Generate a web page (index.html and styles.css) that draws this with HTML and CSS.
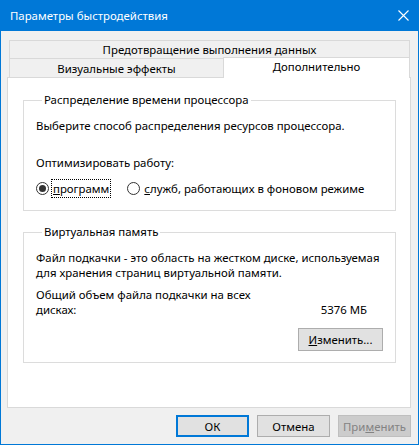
FILE: index.html
```html
<!DOCTYPE html>
<html lang="ru">
<head>
    <meta charset="UTF-8">
    <title>Параметры быстродействия</title>
    <link rel="stylesheet" href="styles.css">
</head>
<body>

    <div class="window">
        <!-- Заголовок окна -->
        <div class="titlebar">
            <span>Параметры быстродействия</span>
            <svg class="close" width="11" height="11" viewBox="0 0 11 11">
                <path d="M0.5 0.5 L10.5 10.5 M10.5 0.5 L0.5 10.5" stroke="#fff" stroke-width="1.1" fill="none"/>
            </svg>
        </div>

        <div class="dialog-body">
            <!-- Вкладки -->
            <div class="tabs">
                <div class="tab-row">
                    <div class="tab tab-wide">Предотвращение выполнения данных</div>
                </div>
                <div class="tab-row">
                    <div class="tab tab-left">Визуальные эффекты</div>
                    <div class="tab tab-active">Дополнительно</div>
                </div>
            </div>

            <div class="panel">
                <div class="group group-cpu">
                    <div class="group-title">Распределение времени процессора</div>
                    <p class="line first">Выберите способ распределения ресурсов процессора.</p>
                    <p class="line optimize">Оптимизировать работу:</p>
                    <div class="radio-row">
                        <label class="radio">
                            <span class="radio-circle checked"></span>
                            <span class="radio-text focused"><u>п</u>рограмм</span>
                        </label>
                        <label class="radio">
                            <span class="radio-circle"></span>
                            <span class="radio-text"><u>с</u>лужб, работающих в фоновом режиме</span>
                        </label>
                    </div>
                </div>

                <div class="group group-vm">
                    <div class="group-title">Виртуальная память</div>
                    <p class="line first">Файл подкачки - это область на жестком диске, используемая<br>для хранения страниц виртуальной памяти.</p>
                    <div class="size-row">
                        <p class="line">Общий объем файла подкачки на всех<br>дисках:</p>
                        <span class="line size-value">5376 МБ</span>
                    </div>
                    <div class="change-row">
                        <button class="btn btn-change"><u>И</u>зменить...</button>
                    </div>
                </div>
            </div>

            <!-- Кнопки диалога -->
            <div class="buttons">
                <button class="btn btn-default">ОК</button>
                <button class="btn">Отмена</button>
                <button class="btn" disabled>При<u>м</u>енить</button>
            </div>
        </div>
    </div>

</body>
</html>
```

FILE: styles.css
```css
body {
    margin: 0;
    font-family: "Noto Sans", "Open Sans", sans-serif;
    font-size: 11.4px;
    color: #000;
    background: #fff;
}
.window {
    width: 419px;
    height: 445px;
    box-sizing: border-box;
    border: 1px solid #0078d7;
    border-top: none;
    background: #f0f0f0;
    display: flex;
    flex-direction: column;
}
.titlebar {
    height: 31px;
    flex: none;
    background: #0078d7;
    color: #fff;
    display: flex;
    align-items: center;
    justify-content: space-between;
    padding: 0 9px 0 9px;
}
.close {
    display: block;
}
.dialog-body {
    flex: 1;
    padding: 9px 7px 0 6px;
    display: flex;
    flex-direction: column;
}
.tabs {
    margin: 0 1px 0 2px;
}
.tab-row {
    display: flex;
    height: 18px;
}
.tab-row + .tab-row {
    height: 19px;
}
.tab {
    box-sizing: border-box;
    border: 1px solid #d9d9d9;
    border-bottom: none;
    background: #f0f0f0;
    text-align: center;
    line-height: 18px;
    white-space: nowrap;
}
.tab-wide {
    flex: 1;
}
.tab-left {
    width: 214px;
    border-right: none;
    line-height: 20px;
}
.tab-active {
    flex: 1;
    position: relative;
    z-index: 1;
    margin-top: -1px;
    height: 21px;
    background: #fff;
    line-height: 17px;
}
.panel {
    height: 331px;
    box-sizing: border-box;
    border: 1px solid #d9d9d9;
    background: #fff;
    padding: 22px 14px 0 15px;
}
.group {
    border: 1px solid #dcdcdc;
    padding: 0 10px 0 12px;
}
.group-title {
    width: fit-content;
    margin: -9px 0 0 6px;
    padding: 0 2px;
    background: #fff;
    line-height: 16px;
}
.line {
    margin: 0;
    line-height: 15px;
    white-space: nowrap;
}
.group-cpu {
    padding-bottom: 12px;
}
.group-cpu .first {
    margin-top: 10px;
}
.optimize {
    margin-top: 22px;
}
.radio-row {
    margin-top: 9px;
    display: flex;
    align-items: center;
    gap: 16px;
    height: 19px;
}
.radio {
    display: flex;
    align-items: center;
}
.radio-circle {
    width: 13px;
    height: 13px;
    box-sizing: border-box;
    border: 1px solid #333;
    border-radius: 50%;
    background: #fff;
    display: flex;
    align-items: center;
    justify-content: center;
    margin-right: 2px;
}
.radio-circle.checked::after {
    content: "";
    width: 7px;
    height: 7px;
    border-radius: 50%;
    background: #333;
}
.radio-text {
    padding: 1px 1px;
    line-height: 15px;
    border: 1px solid transparent;
}
.radio-text.focused {
    border: 1px dotted #000;
}
.group-vm {
    margin-top: 21px;
    padding-bottom: 11px;
}
.group-vm .first {
    margin-top: 10px;
}
.size-row {
    margin-top: 7px;
    display: flex;
    align-items: flex-end;
    justify-content: space-between;
    padding-right: 18px;
}
.change-row {
    margin-top: 11px;
    display: flex;
    justify-content: flex-end;
    padding-right: 2px;
}
.btn {
    font-family: inherit;
    font-size: 11.4px;
    color: #000;
    height: 22px;
    width: 73px;
    padding: 0;
    box-sizing: border-box;
    background: #e1e1e1;
    border: 1px solid #adadad;
    border-radius: 0;
}
.btn-change {
    width: 85px;
    height: 23px;
}
.btn-default {
    border: 2px solid #0078d7;
}
.btn:disabled {
    background: #cccccc;
    border-color: #bfbfbf;
    color: #838383;
}
.buttons {
    margin-top: 7px;
    display: flex;
    justify-content: flex-end;
    gap: 8px;
}
```
